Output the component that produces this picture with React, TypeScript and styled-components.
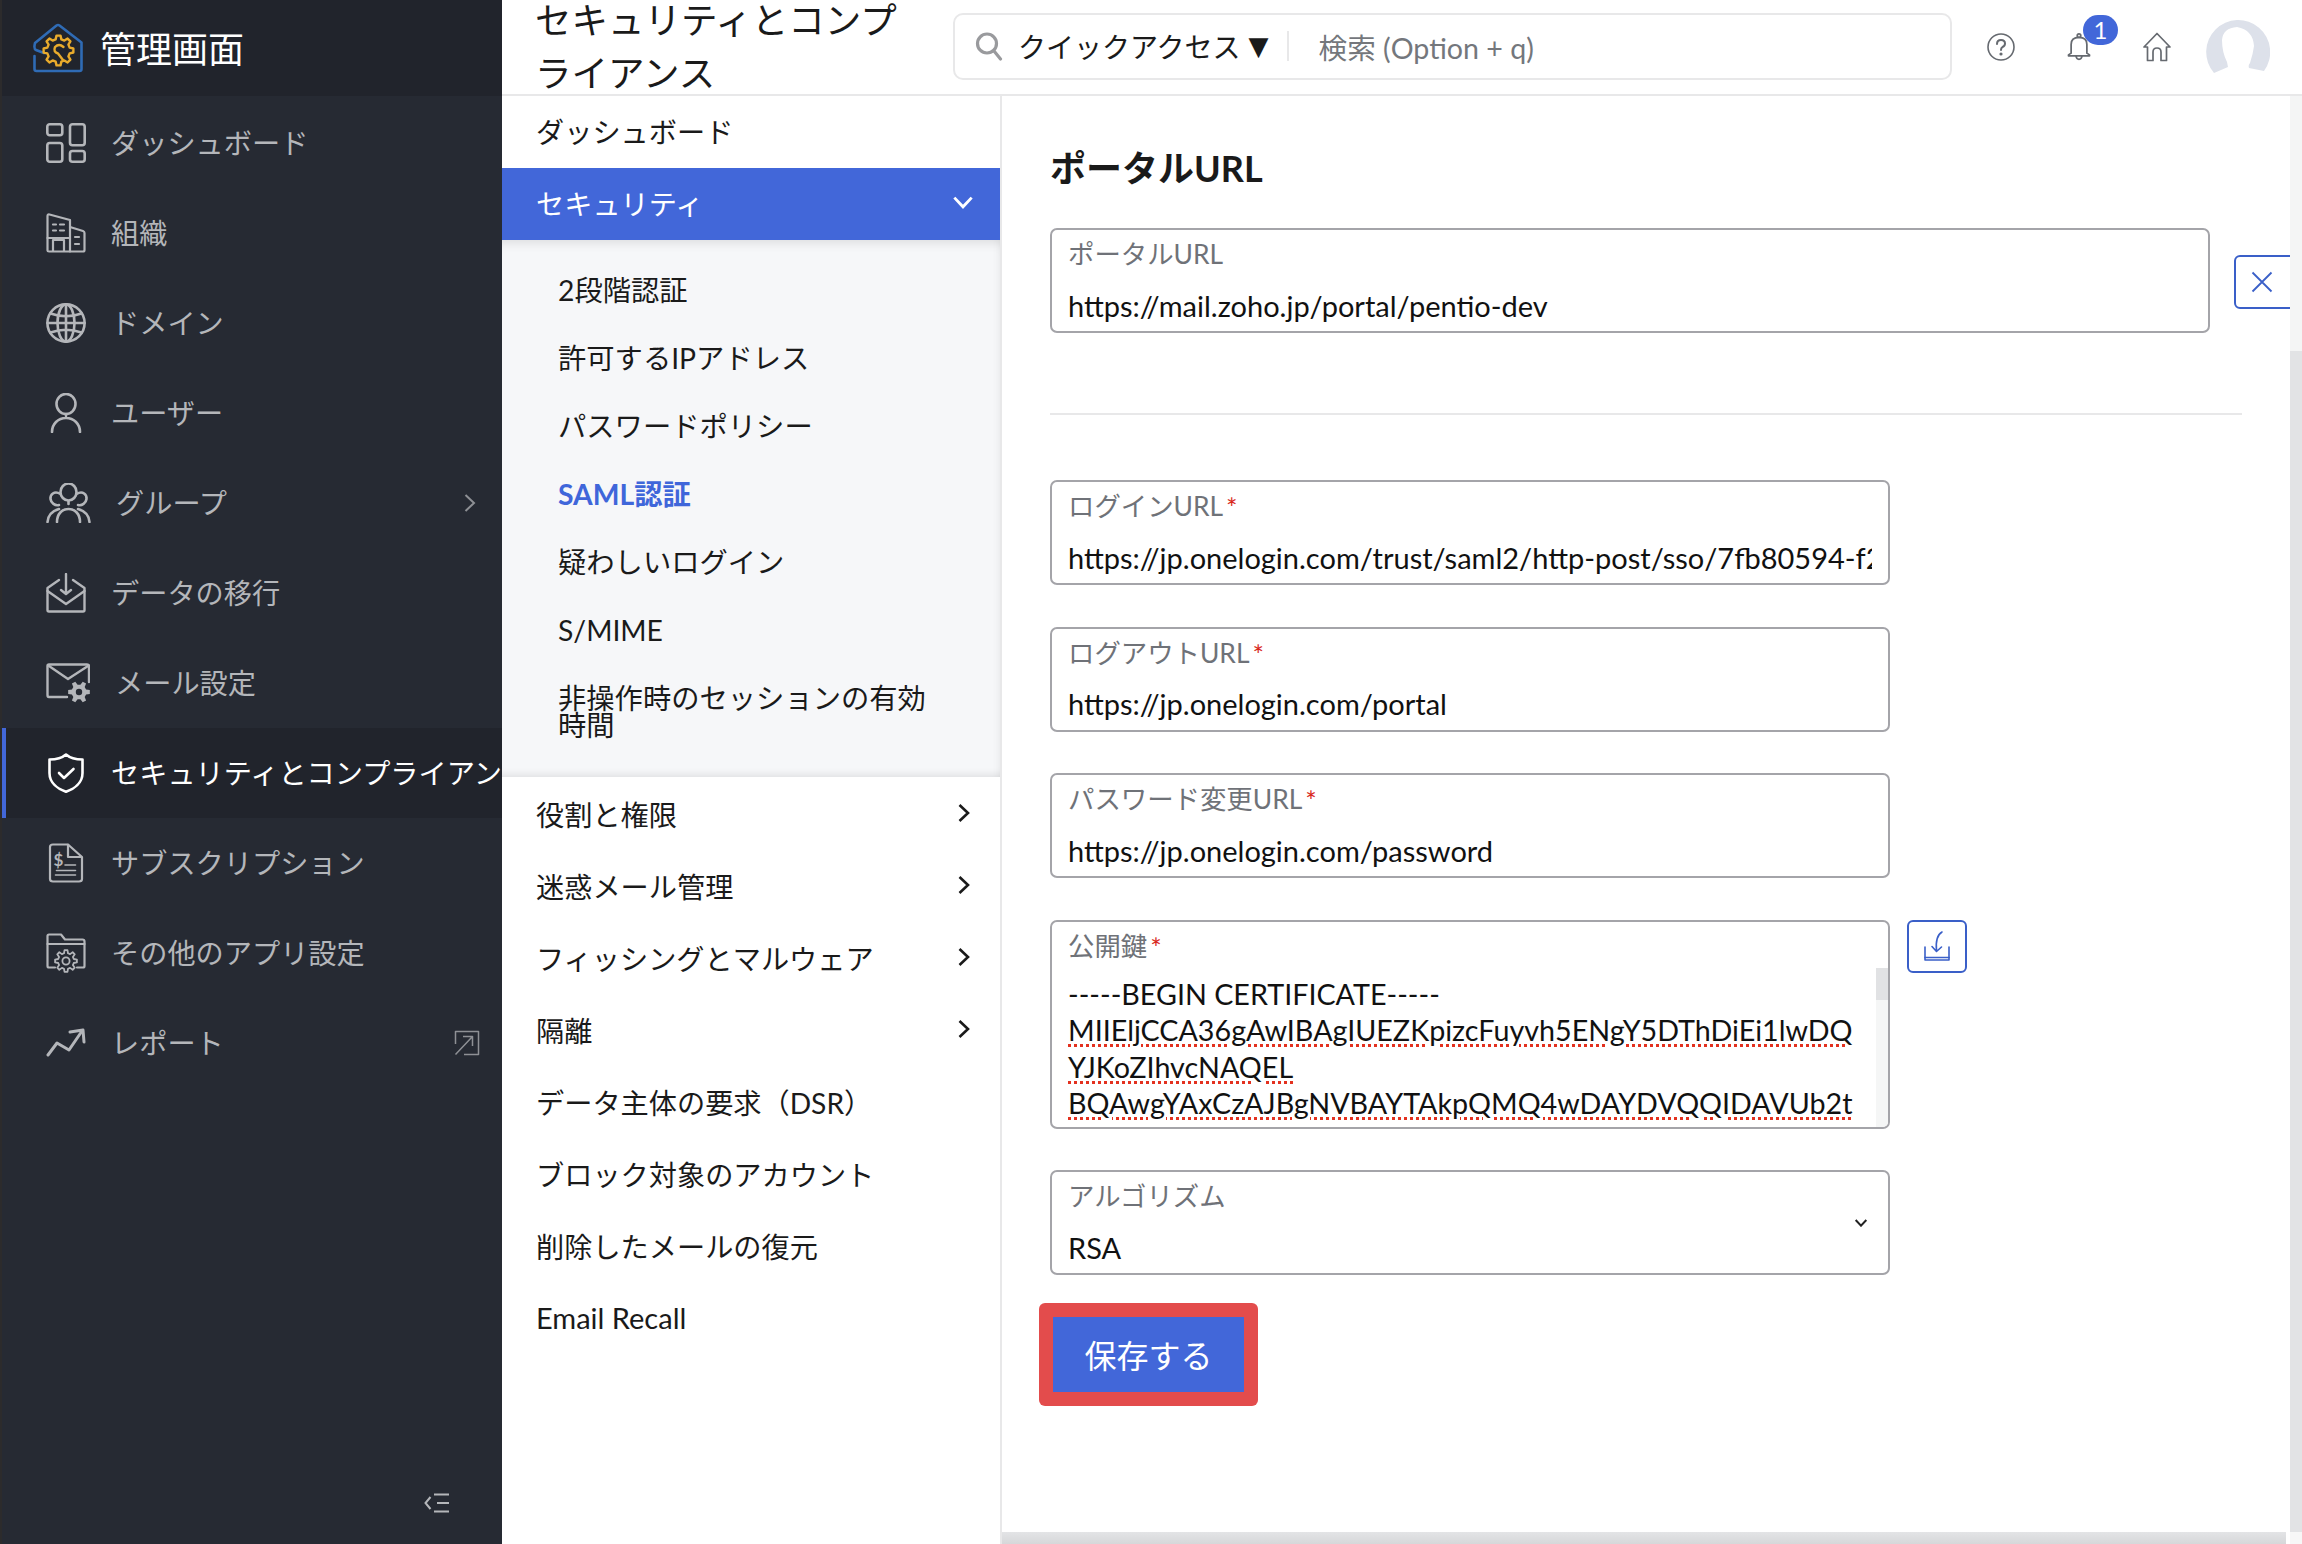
import React from 'react';
import styled, { createGlobalStyle } from 'styled-components';

const GlobalStyle = createGlobalStyle`
  * { box-sizing: border-box; }
  html, body { margin: 0; padding: 0; background: #fff; }
  body { font-family: Lato, "Noto Sans CJK JP", sans-serif; color: #1a1a1a; }
`;

const stroke = {
  fill: 'none',
  stroke: 'currentColor',
  strokeWidth: 2.6,
  strokeLinecap: 'round',
  strokeLinejoin: 'round',
} as const;

// outline of a cog, used by the logo and two nav icons
function gearPath(cx: number, cy: number, ro: number, ri: number, n: number) {
  const step = (Math.PI * 2) / n;
  const pts: string[] = [];
  for (let k = 0; k < n; k++) {
    const a = k * step;
    [
      [ri, a - 0.32 * step],
      [ro, a - 0.17 * step],
      [ro, a + 0.17 * step],
      [ri, a + 0.32 * step],
    ].forEach(([r, t]) => {
      pts.push(`${(cx + r * Math.cos(t)).toFixed(2)} ${(cy + r * Math.sin(t)).toFixed(2)}`);
    });
  }
  return `M${pts.join(' L')} Z`;
}

const DashboardIcon = () => (
  <svg width="40" height="40" viewBox="0 0 40 40" {...stroke}>
    <rect x="1.3" y="1.3" width="15" height="11" rx="2.5" />
    <rect x="24" y="1.3" width="14.7" height="21" rx="2.5" />
    <rect x="1.3" y="20" width="15" height="18.7" rx="2.5" />
    <rect x="24" y="28" width="14.7" height="10.7" rx="2.5" />
  </svg>
);

const OrgIcon = () => (
  <svg width="40" height="40" viewBox="0 0 40 40" {...stroke} strokeWidth={2.2}>
    <path d="M1.5 37.5 V3 Q1.5 1 3.5 1.5 L24 7 V38.5 H3 Q1.5 38.5 1.5 37.5 Z" />
    <path d="M24 14 L37 18 Q38.5 18.5 38.5 20 V37 Q38.5 38.5 37 38.5 H24" />
    <path d="M7 11.5 H10 M14 11.5 H18 M7 17.5 H10 M14 17.5 H18 M29 24 H33 M29 31 H33" />
    <path d="M7 38 V27 H18 V38 M1.5 25 H24" />
  </svg>
);

const GlobeIcon = () => (
  <svg width="40" height="40" viewBox="0 0 40 40" {...stroke}>
    <circle cx="20" cy="20" r="18.6" />
    <ellipse cx="20" cy="20" rx="8.5" ry="18.6" />
    <path d="M20 1.5 V38.5 M1.5 20 H38.5 M4.5 10.5 Q20 16 35.5 10.5 M4.5 29.5 Q20 24 35.5 29.5" />
  </svg>
);

const UserIcon = () => (
  <svg width="40" height="40" viewBox="0 0 40 40" {...stroke}>
    <ellipse cx="20" cy="11" rx="9.5" ry="10" />
    <path d="M20 21 V23 M6 39 C6 31 12 25 20 25 C28 25 34 31 34 39" />
  </svg>
);

const GroupIcon = () => (
  <svg width="45" height="40" viewBox="0 0 45 40" {...stroke}>
    <ellipse cx="22.5" cy="9" rx="8" ry="8.5" />
    <path d="M14.5 11 C8 7 4 12 4.5 16 C5 20 9 23 13 22 M30.5 11 C37 7 41 12 40.5 16 C40 20 36 23 32 22" />
    <path d="M22.5 18 V21 M11 39 C11 31 16 26 22.5 26 C29 26 34 31 34 39 M1.5 39 C2 32 6 28 13 26 M43.5 39 C43 32 39 28 32 26" />
  </svg>
);

const MigrateIcon = () => (
  <svg width="40" height="40" viewBox="0 0 40 40" {...stroke} strokeWidth={2.4}>
    <path d="M13 7 L1.5 15 V37 Q1.5 38.5 3 38.5 H37 Q38.5 38.5 38.5 37 V15 L27 7" />
    <path d="M1.5 18 L20 31 L38.5 18" />
    <path d="M20 1 V20 M15 17 L20 21 L25 17" />
  </svg>
);

const MailGearIcon = () => (
  <svg width="44" height="40" viewBox="0 0 44 40" {...stroke} strokeWidth={2.4}>
    <path d="M21 34 H3 Q1.5 34 1.5 32 V3 Q1.5 1.5 3 1.5 H41 Q43 1.5 43 3 V19" />
    <path d="M3 3 L22 16 L42 3" />
    <path d={gearPath(33, 29, 11, 7.5, 6)} fill="currentColor" stroke="none" />
    <circle cx="33" cy="29" r="3.2" fill="#262a33" stroke="none" />
  </svg>
);

const ShieldIcon = () => (
  <svg width="40" height="40" viewBox="0 0 40 40" {...stroke}>
    <path d="M20 1.5 C24 5 29 6.5 36.5 6.5 V20 C36.5 30 28 36 20 38.8 C12 36 3.5 30 3.5 20 V6.5 C11 6.5 16 5 20 1.5 Z" />
    <path d="M13 20 L18 25 L27.5 16" />
  </svg>
);

const SubscriptionIcon = () => (
  <svg width="40" height="40" viewBox="0 0 40 40" {...stroke} strokeWidth={2.2}>
    <path d="M22 1.5 H7 Q4 1.5 4 4 V36 Q4 38.5 7 38.5 H33 Q36 38.5 36 36 V14 L22 1.5 V14 H36" />
    <path d="M10.5 27.5 H29.5 M19 22 H29.5 M9.5 32 H29.5" strokeWidth="1.6" />
    <text x="7.5" y="23" fontFamily="Lato, sans-serif" fontWeight="700" fontSize="17" fill="currentColor" stroke="none">$</text>
  </svg>
);

const FolderGearIcon = () => (
  <svg width="40" height="40" viewBox="0 0 40 40" {...stroke} strokeWidth={2.2}>
    <path d="M9 34.5 H3 Q1.5 34.5 1.5 33 V3 Q1.5 1.5 3 1.5 H15 L19 6.5 H36.5 Q38.5 6.5 38.5 8.5 V33 Q38.5 34.5 37 34.5 H31" />
    <path d="M1.5 11 H38.5" />
    <path d={gearPath(20, 28, 11, 8, 8)} strokeWidth="1.8" fill="#262a33" />
    <circle cx="20" cy="28" r="3.6" strokeWidth="1.8" />
  </svg>
);

const ReportIcon = () => (
  <svg width="40" height="30" viewBox="0 0 40 30" {...stroke} strokeWidth={3}>
    <path d="M2 27 L11 15 L23 22 L36 3" />
    <path d="M24 4 L37 2 L38 14" />
  </svg>
);

const ExternalIcon = () => (
  <svg width="26" height="26" viewBox="0 0 26 26" {...stroke} strokeWidth={1.5} strokeLinecap="butt">
    <path d="M1.5 14 V1.5 H24.5 V24.5 H10" />
    <path d="M1.5 24.5 L18 7 M9 6.5 H18.5 V16" />
  </svg>
);

const CollapseIcon = () => (
  <svg width="26" height="20" viewBox="0 0 26 20" fill="none" stroke="currentColor" strokeWidth="2">
    <path d="M6.5 4 L1.5 10 L6.5 16" />
    <path d="M10 1.5 H25 M13 10 H25 M10 18.5 H25" />
  </svg>
);

const Chevron = ({ w = 12, h = 20, sw = 2.6, dir = 'right' }: { w?: number; h?: number; sw?: number; dir?: 'right' | 'down' }) => (
  <svg
    width={dir === 'right' ? w : h}
    height={dir === 'right' ? h : w}
    viewBox={dir === 'right' ? '0 0 12 20' : '0 0 20 12'}
    fill="none"
    stroke="currentColor"
    strokeWidth={sw}
  >
    {dir === 'right' ? <path d="M1.5 2 L10 10 L1.5 18" /> : <path d="M2 1.5 L10 10 L18 1.5" />}
  </svg>
);

const Logo = () => (
  <svg width="50" height="50" viewBox="0 0 50 50" fill="none" strokeLinejoin="round" strokeLinecap="round">
    <path
      d="M1.5 33 V46 Q1.5 48 3.5 48 H46.5 Q48.5 48 48.5 46 V19.5 L26.5 2.5 Q25 1.5 23.5 2.5 L2 20 Q0.5 26 3 27 L11 30"
      stroke="#2f6bb5"
      strokeWidth="2.6"
    />
    <path d={gearPath(25.5, 27.5, 15, 11.5, 8)} stroke="#e9ab2c" strokeWidth="2.4" fill="#21242c" />
    <path d="M30.5 24 Q26 20 22 24 Q20 29 25 30.5 L30 37" stroke="#e9ab2c" strokeWidth="2.4" />
  </svg>
);

const SearchIcon = () => (
  <svg width="28" height="30" viewBox="0 0 28 30" fill="none" stroke="#999a9d" strokeWidth="3.2" strokeLinecap="round">
    <circle cx="12" cy="12.5" r="9.5" />
    <path d="M19 20 L25.5 28" />
  </svg>
);

const HelpIcon = () => (
  <svg width="28" height="28" viewBox="0 0 28 28" fill="none" stroke="#666a70" strokeWidth="1.6" strokeLinecap="round">
    <circle cx="14" cy="14" r="13" />
    <path d="M10 11 Q10 7 14 7 Q18 7 18 10.5 Q18 13 15.5 14 Q14 15 14 17" strokeWidth="2" />
    <circle cx="14" cy="21" r="0.8" strokeWidth="1.6" />
  </svg>
);

const BellIcon = () => (
  <svg width="28" height="28" viewBox="-2 0 32 32" fill="none" stroke="#666a70" strokeWidth="2" strokeLinejoin="round">
    <path d="M5 23 V13 Q5 5 14 5 Q23 5 23 13 V23 L26 25 V26 H2 V25 Z" />
    <circle cx="14" cy="3" r="2" />
    <path d="M10.5 26 Q11 30 14 30 Q17 30 17.5 26" />
  </svg>
);

const HomeIcon = () => (
  <svg width="28" height="30" viewBox="0 0 28 30" fill="none" stroke="#666a70" strokeWidth="1.7" strokeLinejoin="round">
    <path d="M14 1.5 L27 15 H23.5 V28.5 H18 V20 Q18 16 14 16 Q10 16 10 20 V28.5 H4.5 V15 H1 Z" />
  </svg>
);

const Avatar = () => (
  <svg width="64" height="54" viewBox="0 0 64 54">
    <path
      d="M8 53 A32 32 0 1 1 58 51 L43 48 Q42 45 44 43 Q47 34 48 26 Q47 10 31 7 Q17 8 16 20 Q16 32 21 42 L22 47 Z"
      fill="#dde1ea"
    />
  </svg>
);

const CloseIcon = () => (
  <svg width="22" height="22" viewBox="0 0 22 22" fill="none" stroke="#3a5fc8" strokeWidth="1.8">
    <path d="M1.5 1.5 L20.5 20.5 M20.5 1.5 L1.5 20.5" />
  </svg>
);

const ImportIcon = () => (
  <svg width="28" height="32" viewBox="0 0 28 32" fill="none" stroke="#3a5fc8" strokeWidth="1.6" strokeLinecap="round" strokeLinejoin="round">
    <path d="M2 17 V30 H26 V17" />
    <path d="M2 27.5 H26" />
    <path d="M19 2 Q12 6 13.5 21 M9 16.5 L13.5 21.5 L18.5 17" />
  </svg>
);

// data
const navItems = [
  { label: 'ダッシュボード', icon: <DashboardIcon /> },
  { label: '組織', icon: <OrgIcon /> },
  { label: 'ドメイン', icon: <GlobeIcon /> },
  { label: 'ユーザー', icon: <UserIcon /> },
  { label: 'グループ', icon: <GroupIcon />, trail: 'chevron' },
  { label: 'データの移行', icon: <MigrateIcon /> },
  { label: 'メール設定', icon: <MailGearIcon /> },
  { label: 'セキュリティとコンプライアンス', icon: <ShieldIcon />, active: true },
  { label: 'サブスクリプション', icon: <SubscriptionIcon /> },
  { label: 'その他のアプリ設定', icon: <FolderGearIcon /> },
  { label: 'レポート', icon: <ReportIcon />, trail: 'external' },
];

const securityItems = [
  '2段階認証',
  '許可するIPアドレス',
  'パスワードポリシー',
  'SAML認証',
  '疑わしいログイン',
  'S/MIME',
  '非操作時のセッションの有効時間',
];

const lowerItems = [
  { label: '役割と権限', more: true },
  { label: '迷惑メール管理', more: true },
  { label: 'フィッシングとマルウェア', more: true },
  { label: '隔離', more: true },
  { label: 'データ主体の要求（DSR）' },
  { label: 'ブロック対象のアカウント' },
  { label: '削除したメールの復元' },
  { label: 'Email Recall', latin: true },
];

export default function App() {
  return (
    <>
      <GlobalStyle />
      <Page>
        <Sidebar>
          <Brand>
            <Logo />
            <BrandName>管理画面</BrandName>
          </Brand>
          <Nav>
            {navItems.map((item) => (
              <NavRow key={item.label} $active={item.active}>
                {item.icon}
                <NavLabel>{item.label}</NavLabel>
                {item.trail === 'chevron' && (
                  <NavTrail $pad={26}>
                    <Chevron sw={2} />
                  </NavTrail>
                )}
                {item.trail === 'external' && (
                  <NavTrail $pad={22}>
                    <ExternalIcon />
                  </NavTrail>
                )}
              </NavRow>
            ))}
          </Nav>
          <CollapseRow>
            <CollapseIcon />
          </CollapseRow>
        </Sidebar>

        <Main>
          <TopBar>
            <PageTitle>セキュリティとコンプライアンス</PageTitle>
            <SearchBox>
              <SearchIcon />
              <QuickAccess>
                クイックアクセス
                <Caret>▼</Caret>
              </QuickAccess>
              <SearchDivider />
              <SearchHint>検索 (Option + q)</SearchHint>
            </SearchBox>
            <TopIcons>
              <HelpIcon />
              <BellWrap>
                <BellIcon />
                <Badge>1</Badge>
              </BellWrap>
              <HomeIcon />
              <AvatarWrap>
                <Avatar />
              </AvatarWrap>
            </TopIcons>
          </TopBar>

          <Body>
            <SubMenu>
              <SubRow $raised>ダッシュボード</SubRow>
              <SubRow $raised $selected>
                セキュリティ
                <Chevron dir="down" w={13} h={22} />
              </SubRow>
              <SubPanel>
                {securityItems.map((label) => (
                  <PanelItem key={label} $active={label === 'SAML認証'}>
                    {label}
                  </PanelItem>
                ))}
              </SubPanel>
              {lowerItems.map((item) => (
                <SubRow key={item.label} $latin={item.latin}>
                  {item.label}
                  {item.more && <Chevron />}
                </SubRow>
              ))}
            </SubMenu>

            <ContentWrap>
              <Content>
                <Heading>ポータルURL</Heading>
                <PortalRow>
                  <Field $width={1160} $flush>
                    <FieldBody>
                      <FieldLabel>ポータルURL</FieldLabel>
                      <FieldValue>https://mail.zoho.jp/portal/pentio-dev</FieldValue>
                    </FieldBody>
                  </Field>
                  <ClearButton>
                    <CloseIcon />
                  </ClearButton>
                </PortalRow>
                <Rule />
                <Field>
                  <FieldBody>
                    <FieldLabel>
                      ログインURL<Req>*</Req>
                    </FieldLabel>
                    <FieldValue>https://jp.onelogin.com/trust/saml2/http-post/sso/7fb80594-f2c1-4d7e-9a10</FieldValue>
                  </FieldBody>
                </Field>
                <Field>
                  <FieldBody>
                    <FieldLabel>
                      ログアウトURL<Req>*</Req>
                    </FieldLabel>
                    <FieldValue>https://jp.onelogin.com/portal</FieldValue>
                  </FieldBody>
                </Field>
                <Field>
                  <FieldBody>
                    <FieldLabel>
                      パスワード変更URL<Req>*</Req>
                    </FieldLabel>
                    <FieldValue>https://jp.onelogin.com/password</FieldValue>
                  </FieldBody>
                </Field>
                <KeyRow>
                  <Field $height={209}>
                    <FieldBody>
                      <FieldLabel>
                        公開鍵<Req>*</Req>
                      </FieldLabel>
                      <KeyLines>
                        <div>-----BEGIN CERTIFICATE-----</div>
                        <div>
                          <Spell>MIIEljCCA36gAwIBAgIUEZKpizcFuyvh5ENgY5DThDiEi1lwDQ</Spell>
                        </div>
                        <div>
                          <Spell>YJKoZIhvcNAQEL</Spell>
                        </div>
                        <div>
                          <Spell>BQAwgYAxCzAJBgNVBAYTAkpQMQ4wDAYDVQQIDAVUb2t</Spell>
                        </div>
                      </KeyLines>
                    </FieldBody>
                    <KeyScroll>
                      <KeyThumb />
                    </KeyScroll>
                  </Field>
                  <UploadButton>
                    <ImportIcon />
                  </UploadButton>
                </KeyRow>
                <Field>
                  <FieldBody>
                    <FieldLabel>アルゴリズム</FieldLabel>
                    <FieldValue>RSA</FieldValue>
                  </FieldBody>
                  <SelectArrow>
                    <Chevron dir="down" w={8} h={14} sw={3} />
                  </SelectArrow>
                </Field>
                <SaveHighlight>
                  <SaveButton>保存する</SaveButton>
                </SaveHighlight>
              </Content>
              <VScroll>
                <VThumb />
              </VScroll>
              <HScroll />
              <ScrollCorner />
            </ContentWrap>
          </Body>
        </Main>
      </Page>
    </>
  );
}

const Page = styled.div`
  width: 2302px;
  height: 1544px;
  display: flex;
  overflow: hidden;

  svg {
    flex: none;
  }
`;

const Sidebar = styled.aside`
  width: 502px;
  flex: none;
  height: 100%;
  display: flex;
  flex-direction: column;
  background: #262a33;
  border-left: 2px solid #2c2b2c;
  overflow: hidden;
`;

const Brand = styled.div`
  height: 96px;
  flex: none;
  display: flex;
  align-items: center;
  gap: 17px;
  padding-left: 31px;
  background: #21242c;
`;

const BrandName = styled.div`
  margin-bottom: 3px;
  font-size: 36px;
  color: #fff;
`;

const Nav = styled.nav`
  padding-top: 2px;
  flex: 1;
`;

const NavRow = styled.div<{ $active?: boolean }>`
  height: 90px;
  display: flex;
  align-items: center;
  gap: 25px;
  padding-left: ${(p) => (p.$active ? '40px' : '44px')};
  border-left: ${(p) => (p.$active ? '4px solid #4267d9' : 'none')};
  background: ${(p) => (p.$active ? '#21242c' : 'transparent')};
  color: ${(p) => (p.$active ? '#fff' : '#b4b6ba')};
  white-space: nowrap;
  overflow: hidden;
`;

const NavLabel = styled.span`
  font-size: 28.2px;
  line-height: 40px;
`;

const NavTrail = styled.span<{ $pad: number }>`
  margin-left: auto;
  padding-right: ${(p) => p.$pad}px;
  display: flex;
  color: #8e9095;
`;

const CollapseRow = styled.div`
  display: flex;
  justify-content: flex-end;
  padding: 0 52px 31px 0;
  color: #b4b6ba;
`;

const Main = styled.div`
  flex: 1;
  min-width: 0;
  display: flex;
  flex-direction: column;
`;

const TopBar = styled.header`
  height: 96px;
  flex: none;
  display: flex;
  align-items: center;
  padding-left: 33px;
  border-bottom: 2px solid #e8e8e9;
`;

const PageTitle = styled.div`
  width: 380px;
  flex: none;
  margin-right: 38px;
  font-size: 36.5px;
  line-height: 53px;
  color: #1a1a1a;
`;

const SearchBox = styled.div`
  width: 999px;
  height: 67px;
  flex: none;
  margin-bottom: 2px;
  display: flex;
  align-items: center;
  padding-left: 20px;
  border: 2px solid #e8e8e9;
  border-radius: 10px;
`;

const QuickAccess = styled.div`
  margin-left: 15px;
  display: flex;
  align-items: center;
  font-size: 28px;
  color: #1a1a1a;
`;

const Caret = styled.span`
  margin-left: 8px;
  font-size: 26px;
  line-height: 30px;
  font-family: "DejaVu Sans", sans-serif;
`;

const SearchDivider = styled.div`
  width: 2px;
  height: 30px;
  margin: 0 30px 0 18px;
  background: #e8e8e9;
`;

const SearchHint = styled.div`
  font-size: 28.6px;
  color: #74777c;
`;

const TopIcons = styled.div`
  display: flex;
  align-items: center;
  gap: 50px;
  margin-left: 35px;
`;

const BellWrap = styled.div`
  position: relative;
  display: flex;
`;

const Badge = styled.span`
  position: absolute;
  left: 18px;
  top: -18px;
  width: 35px;
  height: 30px;
  border-radius: 15px;
  background: #4267d9;
  color: #fff;
  font-size: 24px;
  line-height: 30px;
  text-align: center;
`;

const AvatarWrap = styled.div`
  margin-left: -15px;
  display: flex;
`;

const Body = styled.div`
  flex: 1;
  min-height: 0;
  display: flex;
`;

const SubMenu = styled.div`
  width: 500px;
  flex: none;
  border-right: 2px solid #e8e8e9;
`;

const SubRow = styled.div<{ $selected?: boolean; $raised?: boolean; $latin?: boolean }>`
  height: 72px;
  display: flex;
  align-items: center;
  justify-content: space-between;
  padding: 0 ${(p) => (p.$selected ? '26px' : '30px')} ${(p) => (p.$raised ? '3px' : '0')} 34px;
  font-size: ${(p) => (p.$latin ? '29px' : '28.2px')};
  background: ${(p) => (p.$selected ? '#4267d9' : 'transparent')};
  color: ${(p) => (p.$selected ? '#fff' : '#1a1a1a')};
`;

const SubPanel = styled.div`
  padding: 16.5px 70px 17.5px 56px;
  background: #f6f7f9;
  box-shadow: inset 0 12px 12px -10px rgba(0, 0, 0, 0.12), inset 0 -10px 10px -9px rgba(0, 0, 0, 0.12),
    inset -8px 0 8px -8px rgba(0, 0, 0, 0.08);
`;

const PanelItem = styled.div<{ $active?: boolean }>`
  padding: 20.5px 0;
  font-size: 28.3px;
  line-height: 27px;
  font-weight: ${(p) => (p.$active ? 700 : 400)};
  color: ${(p) => (p.$active ? '#3f66da' : '#1a1a1a')};
`;

const ContentWrap = styled.div`
  flex: 1;
  min-width: 0;
  display: grid;
  grid-template-columns: 1fr 12px;
  grid-template-rows: 1fr 12px;
`;

const Content = styled.main`
  overflow: hidden;
  padding: 51px 0 0 48px;
  min-width: 0;
`;

const Heading = styled.h2`
  margin: 0 0 39px;
  font-size: 36px;
  line-height: 42px;
  font-weight: 700;
  color: #1a1a1a;
`;

const PortalRow = styled.div`
  display: flex;
  align-items: center;
  gap: 24px;
`;

const Field = styled.div<{ $width?: number; $height?: number; $flush?: boolean }>`
  position: relative;
  width: ${(p) => p.$width ?? 840}px;
  height: ${(p) => p.$height ?? 105}px;
  flex: none;
  display: flex;
  align-items: center;
  margin-bottom: ${(p) => (p.$flush ? '0' : '41.5px')};
  border: 2px solid #a4a4a9;
  border-radius: 7px;
  overflow: hidden;
`;

const FieldBody = styled.div`
  flex: 1;
  min-width: 0;
  align-self: flex-start;
  padding: 8px 16px 0;
`;

const FieldLabel = styled.div`
  font-size: 26.4px;
  line-height: 32px;
  color: #6f7278;
  white-space: nowrap;
`;

const Req = styled.span`
  margin-left: 3px;
  color: #d8281c;
  font-size: 27px;
  line-height: 0;
  vertical-align: -2px;
`;

const FieldValue = styled.div`
  margin-top: 19.5px;
  font-size: 29px;
  line-height: 32px;
  color: #111;
  white-space: nowrap;
  overflow: hidden;
`;

const ClearButton = styled.button`
  width: 70px;
  height: 54px;
  flex: none;
  margin-top: 3px;
  padding: 0 14px 0 0;
  display: flex;
  align-items: center;
  justify-content: center;
  background: #fff;
  border: 2px solid #3a5fc8;
  border-radius: 6px;
`;

const Rule = styled.div`
  width: 1192px;
  height: 2px;
  margin: 80px 0 65px;
  background: #e8e8e9;
`;

const KeyRow = styled.div`
  display: flex;
  align-items: flex-start;
  gap: 17px;
`;

const KeyLines = styled.div`
  margin-top: 14px;
  font-size: 28.7px;
  line-height: 36.5px;
  color: #111;
  white-space: nowrap;
`;

const Spell = styled.span`
  text-decoration: underline dotted #e3311f 3px;
  text-underline-offset: 3px;
`;

const KeyScroll = styled.div`
  position: absolute;
  top: 46px;
  right: 0;
  bottom: 0;
  width: 12px;
  background: #f5f6f6;
`;

const KeyThumb = styled.div`
  height: 32px;
  background: #e1e2e4;
`;

const UploadButton = styled.button`
  width: 60px;
  height: 53px;
  flex: none;
  padding: 0;
  display: flex;
  align-items: center;
  justify-content: center;
  background: #fff;
  border: 2px solid #3a5fc8;
  border-radius: 6px;
`;

const SelectArrow = styled.span`
  display: flex;
  flex: none;
  padding-right: 20px;
  color: #222;
`;

const SaveHighlight = styled.div`
  width: 219px;
  height: 103px;
  margin: -14px 0 0 -11px;
  padding: 14px;
  background: #e34c4c;
  border-radius: 6px;
`;

const SaveButton = styled.button`
  width: 191px;
  height: 75px;
  border: none;
  background: #4267d9;
  color: #fff;
  font-family: inherit;
  font-size: 32px;
`;

const VScroll = styled.div`
  background: #f4f5f5;
  padding-top: 255px;
  display: flex;
`;

const VThumb = styled.div`
  flex: 1;
  background: #e2e3e5;
`;

const HScroll = styled.div`
  margin-right: 4px;
  background: linear-gradient(#e3e4e6, #d6d7d9);
`;

const ScrollCorner = styled.div`
  background: #f7f7f7;
`;
